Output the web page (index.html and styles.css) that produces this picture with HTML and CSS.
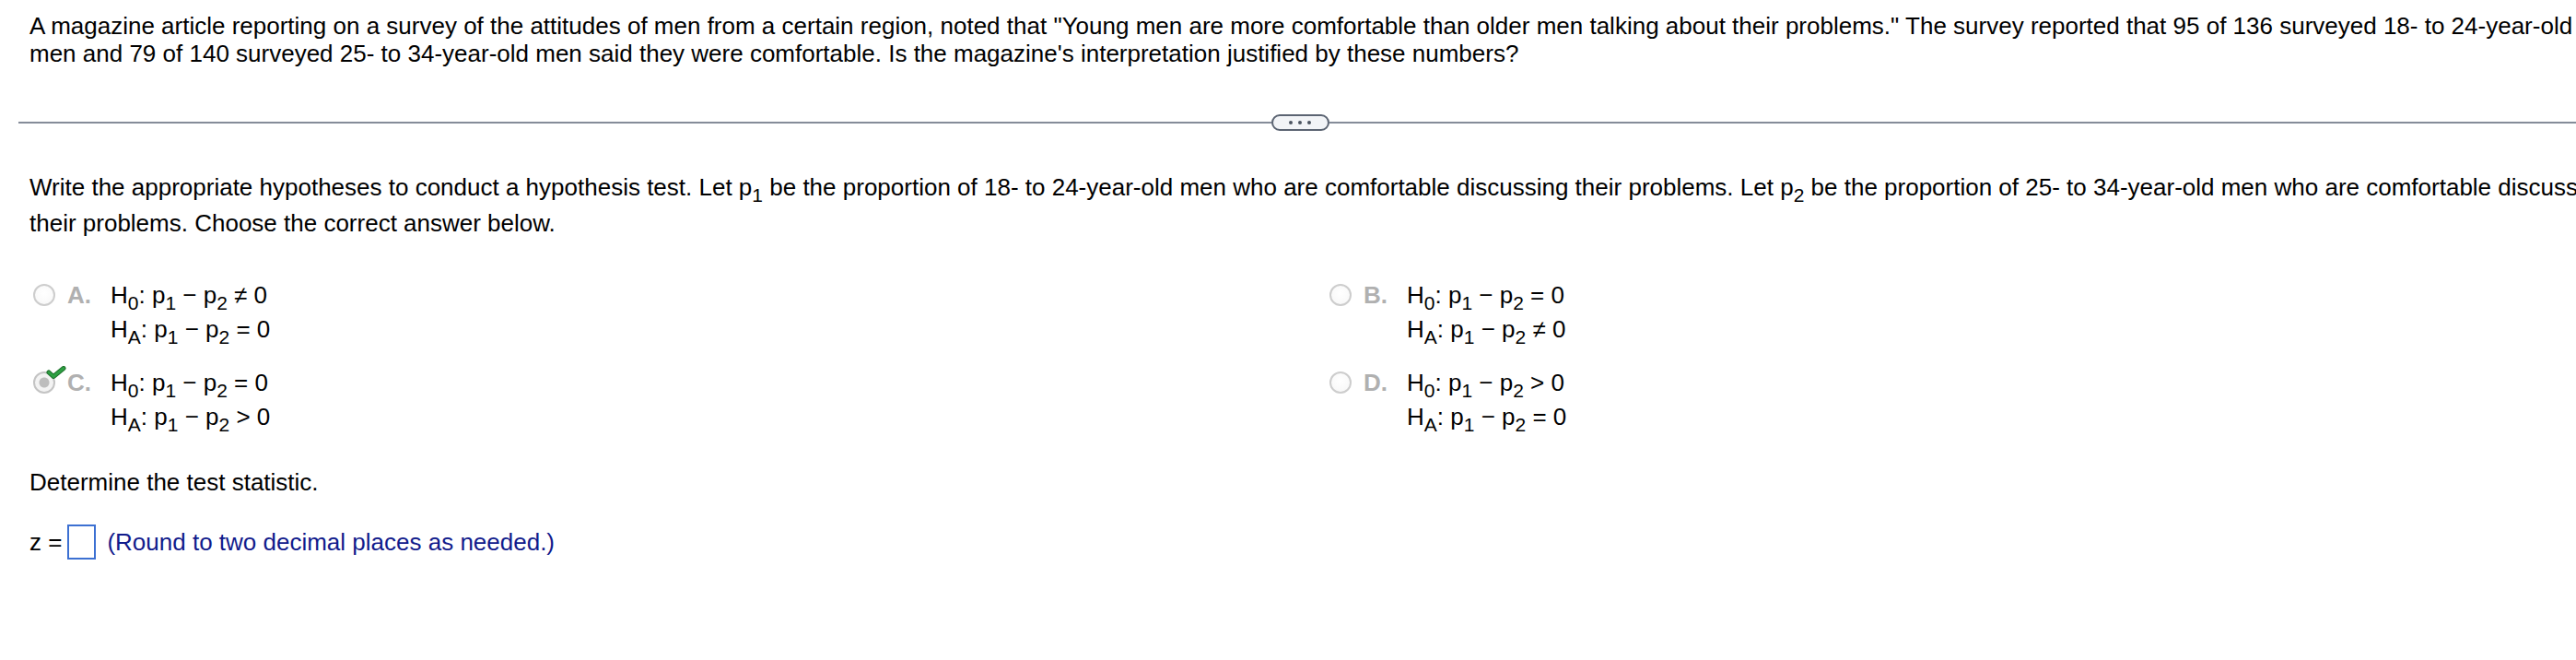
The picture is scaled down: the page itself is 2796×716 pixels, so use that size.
FILE: index.html
```html
<!DOCTYPE html>
<html lang="en">
<head>
<meta charset="utf-8">
<title>Hypothesis test question</title>
<link rel="stylesheet" href="styles.css">
</head>
<body>
<div class="page">
  <p class="stem">A magazine article reporting on a survey of the attitudes of men from a certain region, noted that "Young men are more comfortable than older men talking about their problems." The survey reported that 95 of 136 surveyed 18- to 24-year-old men and 79 of 140 surveyed 25- to 34-year-old men said they were comfortable. Is the magazine's interpretation justified by these numbers?</p>

  <div class="divider">
    <span class="rule"></span>
    <span class="more"><i></i><i></i><i></i></span>
    <span class="rule"></span>
  </div>

  <p class="question">Write the appropriate hypotheses to conduct a hypothesis test. Let p<sub>1</sub> be the proportion of 18- to 24-year-old men who are comfortable discussing their problems. Let p<sub>2</sub> be the proportion of 25- to 34-year-old men who are comfortable discussing their problems. Choose the correct answer below.</p>

  <div class="choices">
    <div class="choice">
      <span class="radio"></span>
      <span class="letter">A.</span>
      <div class="math">
        <div>H<sub>0</sub>: p<sub>1</sub> − p<sub>2</sub> ≠ 0</div>
        <div>H<sub>A</sub>: p<sub>1</sub> − p<sub>2</sub> = 0</div>
      </div>
    </div>
    <div class="choice">
      <span class="radio"></span>
      <span class="letter">B.</span>
      <div class="math">
        <div>H<sub>0</sub>: p<sub>1</sub> − p<sub>2</sub> = 0</div>
        <div>H<sub>A</sub>: p<sub>1</sub> − p<sub>2</sub> ≠ 0</div>
      </div>
    </div>
    <div class="choice">
      <span class="radio selected">
        <svg class="check" width="22" height="14" viewBox="0 0 22 14" aria-hidden="true">
          <path d="M3 7 L8 11.5 L19 2.5" fill="none" stroke="#1d6f2a" stroke-width="5" stroke-linecap="round" stroke-linejoin="round"/>
          <path d="M3 7 L8 11.5 L19 2.5" fill="none" stroke="#2ea043" stroke-width="3" stroke-linecap="round" stroke-linejoin="round"/>
        </svg>
      </span>
      <span class="letter">C.</span>
      <div class="math">
        <div>H<sub>0</sub>: p<sub>1</sub> − p<sub>2</sub> = 0</div>
        <div>H<sub>A</sub>: p<sub>1</sub> − p<sub>2</sub> &gt; 0</div>
      </div>
    </div>
    <div class="choice">
      <span class="radio"></span>
      <span class="letter">D.</span>
      <div class="math">
        <div>H<sub>0</sub>: p<sub>1</sub> − p<sub>2</sub> &gt; 0</div>
        <div>H<sub>A</sub>: p<sub>1</sub> − p<sub>2</sub> = 0</div>
      </div>
    </div>
  </div>

  <p class="prompt">Determine the test statistic.</p>

  <div class="answer">
    <span class="var">z =</span>
    <span class="box"></span>
    <span class="hint">(Round to two decimal places as needed.)</span>
  </div>
</div>
</body>
</html>
```

FILE: styles.css
```css
html, body {
  margin: 0;
  padding: 0;
  background: #ffffff;
  overflow: hidden;
}

body {
  font-family: "Liberation Sans", Arial, sans-serif;
  font-size: 26px;
  color: #000000;
}

.page {
  width: 2764px;
  padding: 13px 0 0 32px;
}

p {
  margin: 0;
}

.stem {
  width: 2770px;
  line-height: 30px;
}

.divider {
  display: flex;
  align-items: center;
  width: 2782px;
  height: 18px;
  margin: 51px 0 0 -12px;
}

.rule {
  flex: 1;
  height: 2px;
  background: #858c99;
}

.more {
  display: flex;
  align-items: center;
  justify-content: center;
  gap: 6px;
  width: 63px;
  height: 18px;
  box-sizing: border-box;
  border: 2px solid #5b6472;
  border-radius: 9px;
  background: #f2f4f7;
}

.more i {
  display: block;
  width: 4px;
  height: 4px;
  border-radius: 50%;
  background: #4b5360;
}

sub {
  font-size: 21px;
  line-height: 0;
  vertical-align: -7px;
}

.question {
  width: 2834px;
  margin-top: 42px;
  line-height: 39px;
}

.choices {
  display: grid;
  grid-template-columns: 1407px 1fr;
  row-gap: 21px;
  margin-top: 40px;
}

.choice {
  display: flex;
  align-items: flex-start;
}

.radio {
  position: relative;
  flex: none;
  width: 24px;
  height: 24px;
  box-sizing: border-box;
  margin: 6px 0 0 4px;
  border: 2px solid #cdcdcd;
  border-radius: 50%;
  background: radial-gradient(circle at 50% 40%, #ffffff 0%, #f6f6f6 100%);
}

.radio.selected {
  border-color: #c4c4c4;
  background: radial-gradient(circle, #bdbdbd 0 5px, #f3f3f3 6px 100%);
}

.check {
  position: absolute;
  left: 12px;
  top: -8px;
}

.letter {
  flex: none;
  width: 47px;
  margin-left: 13px;
  font-weight: bold;
  color: #b0b0b0;
  line-height: 37px;
}

.math {
  line-height: 37px;
}

.prompt {
  margin-top: 37px;
  line-height: 30px;
}

.answer {
  display: flex;
  align-items: center;
  height: 38px;
  margin-top: 31px;
  line-height: 30px;
}

.box {
  width: 31px;
  height: 38px;
  box-sizing: border-box;
  margin-left: 6px;
  border: 2px solid #3c70d2;
}

.hint {
  margin-left: 12px;
  color: #111b8c;
}
```
